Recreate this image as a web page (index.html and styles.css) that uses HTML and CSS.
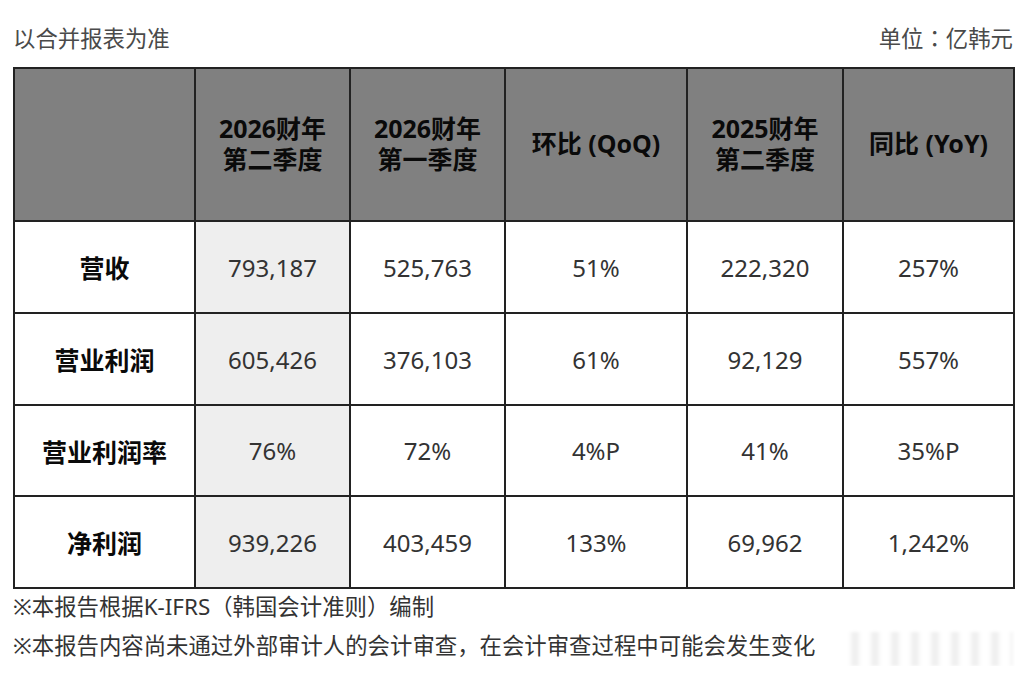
FILE: index.html
```html
<!DOCTYPE html>
<html lang="zh-CN">
<head>
<meta charset="utf-8">
<title>财报</title>
<link rel="stylesheet" href="styles.css">
</head>
<body>
<div class="page">
  <div class="top">
    <span>以合并报表为准</span>
    <span>单位<span class="colon" lang="ja">：</span>亿韩元</span>
  </div>
  <table class="fin">
    <colgroup>
      <col class="c1"><col class="c2"><col class="c3"><col class="c4"><col class="c5"><col class="c6">
    </colgroup>
    <thead>
      <tr>
        <th></th>
        <th>2026财年<br>第二季度</th>
        <th>2026财年<br>第一季度</th>
        <th>环比 (QoQ)</th>
        <th>2025财年<br>第二季度</th>
        <th>同比 (YoY)</th>
      </tr>
    </thead>
    <tbody>
      <tr><th>营收</th><td class="hl">793,187</td><td>525,763</td><td>51%</td><td>222,320</td><td>257%</td></tr>
      <tr><th>营业利润</th><td class="hl">605,426</td><td>376,103</td><td>61%</td><td>92,129</td><td>557%</td></tr>
      <tr><th>营业利润率</th><td class="hl">76%</td><td>72%</td><td>4%P</td><td>41%</td><td>35%P</td></tr>
      <tr><th>净利润</th><td class="hl">939,226</td><td>403,459</td><td>133%</td><td>69,962</td><td>1,242%</td></tr>
    </tbody>
  </table>
  <div class="notes">
    <p class="note">※本报告根据K-IFRS（韩国会计准则）编制</p>
    <div class="note-row">
      <p class="note">※本报告内容尚未通过外部审计人的会计审查，在会计审查过程中可能会发生变化</p>
      <div class="mark" aria-hidden="true"></div>
    </div>
  </div>
</div>
</body>
</html>
```

FILE: styles.css
```css
html, body {
  margin: 0;
  padding: 0;
  background: #ffffff;
}
body {
  font-family: "Noto Sans", "Noto Sans CJK SC", sans-serif;
  color: #333;
}
.page {
  width: 1000px;
  padding: 22px 11px 0 13px;
}
.top {
  display: flex;
  justify-content: space-between;
  align-items: center;
  height: 30px;
  font-size: 22.4px;
  color: #4a4a4a;
  margin-bottom: 15px;
}
.colon {
  font-family: "Noto Sans CJK JP", sans-serif;
}
.fin {
  width: 1000px;
  border-collapse: collapse;
  table-layout: fixed;
}
.c1 { width: 181px; }
.c2 { width: 155px; }
.c3 { width: 155px; }
.c4 { width: 182px; }
.c5 { width: 156px; }
.c6 { width: 171px; }
.fin th, .fin td {
  border: 2px solid #222;
  text-align: center;
  vertical-align: middle;
  padding: 0;
}
.fin thead th {
  background: #808080;
  height: 149px;
  font-size: 25px;
  line-height: 31px;
  font-weight: 700;
  color: #0a0a0a;
  padding-bottom: 2px;
}
.fin tbody th {
  font-size: 25px;
  font-weight: 700;
  color: #0a0a0a;
  height: 90px;
}
.fin tbody td {
  font-size: 24px;
  color: #333;
  height: 90px;
}
.fin tbody tr:nth-child(3) th,
.fin tbody tr:nth-child(3) td {
  height: 89px;
}
.fin td.hl {
  background: #eeeeee;
}
.notes {
  padding-top: 0;
}
.note {
  margin: 0;
  font-size: 22.4px;
  line-height: 35px;
  color: #333;
  white-space: nowrap;
}
.note-row {
  display: flex;
  align-items: center;
  justify-content: space-between;
}
.mark {
  width: 165px;
  height: 34px;
  margin-top: 8px;
  background: repeating-linear-gradient(90deg, rgba(0,0,0,0) 0px, rgba(0,0,0,0.07) 7px, rgba(0,0,0,0) 14px, rgba(0,0,0,0) 20px);
  filter: blur(1.5px);
}
```
